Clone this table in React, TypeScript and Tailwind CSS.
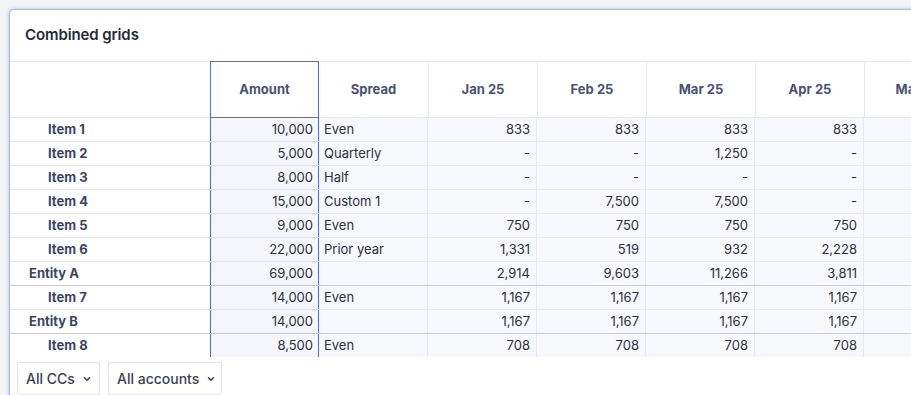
import React from "react";

type Row = {
  label: string;
  entity?: boolean;
  amount: string;
  spread: string;
  vals: string[];
  bottom?: "gray" | "light";
};

const rows: Row[] = [
  { label: "Item 1", amount: "10,000", spread: "Even", vals: ["833", "833", "833", "833"] },
  { label: "Item 2", amount: "5,000", spread: "Quarterly", vals: ["-", "-", "1,250", "-"] },
  { label: "Item 3", amount: "8,000", spread: "Half", vals: ["-", "-", "-", "-"] },
  { label: "Item 4", amount: "15,000", spread: "Custom 1", vals: ["-", "7,500", "7,500", "-"] },
  { label: "Item 5", amount: "9,000", spread: "Even", vals: ["750", "750", "750", "750"] },
  { label: "Item 6", amount: "22,000", spread: "Prior year", vals: ["1,331", "519", "932", "2,228"] },
  { label: "Entity A", entity: true, amount: "69,000", spread: "", vals: ["2,914", "9,603", "11,266", "3,811"], bottom: "gray" },
  { label: "Item 7", amount: "14,000", spread: "Even", vals: ["1,167", "1,167", "1,167", "1,167"] },
  { label: "Entity B", entity: true, amount: "14,000", spread: "", vals: ["1,167", "1,167", "1,167", "1,167"], bottom: "gray" },
  { label: "Item 8", amount: "8,500", spread: "Even", vals: ["708", "708", "708", "708"] },
];

const months = ["Jan 25", "Feb 25", "Mar 25", "Apr 25", "May 25"];

function Chevron() {
  return (
    <svg width="10" height="10" viewBox="0 0 10 10" className="ml-[7px]">
      <path d="M2.5 3.8 L5 6.3 L7.5 3.8" fill="none" stroke="#3b4057" strokeWidth="1.6" strokeLinecap="round" strokeLinejoin="round" />
    </svg>
  );
}

export default function App() {
  return (
    <div
      className="w-[911px] h-[395px] overflow-hidden bg-[#f4f5f7] pt-[9px] pl-[9px]"
      style={{ fontFamily: "Inter, 'Liberation Sans', sans-serif" }}
    >
      <div className="w-[1000px] h-[400px] bg-white border border-[#aab6f4] rounded-tl-[5px] shadow-[0_0_4px_rgba(90,115,240,0.45)] flex flex-col">
        <div className="h-[51px] flex items-center pl-[15px] shrink-0">
          <span className="text-[15px] font-semibold text-[#262a38] tracking-[-0.1px]">Combined grids</span>
        </div>
        {/* header */}
        <div className="flex h-[57px] shrink-0 border-y border-[#e6e9f4] text-[13px] font-bold text-[#4a5273]">
          <div className="w-[200px] shrink-0" />
          <div className="w-[109px] shrink-0 border border-[#3f6ff2] -my-px flex items-center justify-center">
            Amount
          </div>
          <div className="w-[110px] shrink-0 border-r border-[#e6e9f4] flex items-center justify-center">Spread</div>
          {months.map((m) => (
            <div key={m} className="w-[109px] shrink-0 border-r border-[#e6e9f4] flex items-center justify-center">
              {m}
            </div>
          ))}
        </div>
        {/* body */}
        <div className="h-[239px] overflow-hidden shrink-0">
          {rows.map((r) => (
            <div
              key={r.label}
              className={`flex h-[24px] border-b text-[13px] ${r.bottom === "gray" ? "border-[#c9cbd3]" : "border-[#e6e9f4]"}`}
            >
              <div
                className={`w-[200px] shrink-0 bg-white flex items-center font-bold text-[#3d4463] ${r.entity ? "pl-[19px]" : "pl-[38px]"}`}
              >
                {r.label}
              </div>
              <div className="w-[109px] shrink-0 bg-[#f4f6fb] border-x border-[#3f6ff2] flex items-center justify-end pr-[5px] text-[#2b2f3f]">
                {r.amount}
              </div>
              <div className="w-[109px] shrink-0 bg-[#f7f8fc] border-r border-[#e6e9f4] flex items-center pl-[5px] text-[#2b2f3f]">
                {r.spread}
              </div>
              {[...r.vals, ""].map((v, i) => (
                <div
                  key={i}
                  className="w-[109px] shrink-0 bg-[#f7f8fc] border-r border-[#e6e9f4] flex items-center justify-end pr-[6px] text-[#2b2f3f]"
                >
                  {v}
                </div>
              ))}
            </div>
          ))}
        </div>
        {/* footer */}
        <div className="flex gap-[8px] pl-[7px] pt-[5px]">
          <div className="h-[33px] w-[83px] border border-[#e2e5ec] rounded-[2px] flex items-center pl-[8px] text-[14px] font-medium text-[#3b4057]">
            All CCs
            <Chevron />
          </div>
          <div className="h-[33px] w-[114px] border border-[#e2e5ec] rounded-[2px] flex items-center pl-[8px] text-[14px] font-medium text-[#3b4057]">
            All accounts
            <Chevron />
          </div>
        </div>
      </div>
    </div>
  );
}
